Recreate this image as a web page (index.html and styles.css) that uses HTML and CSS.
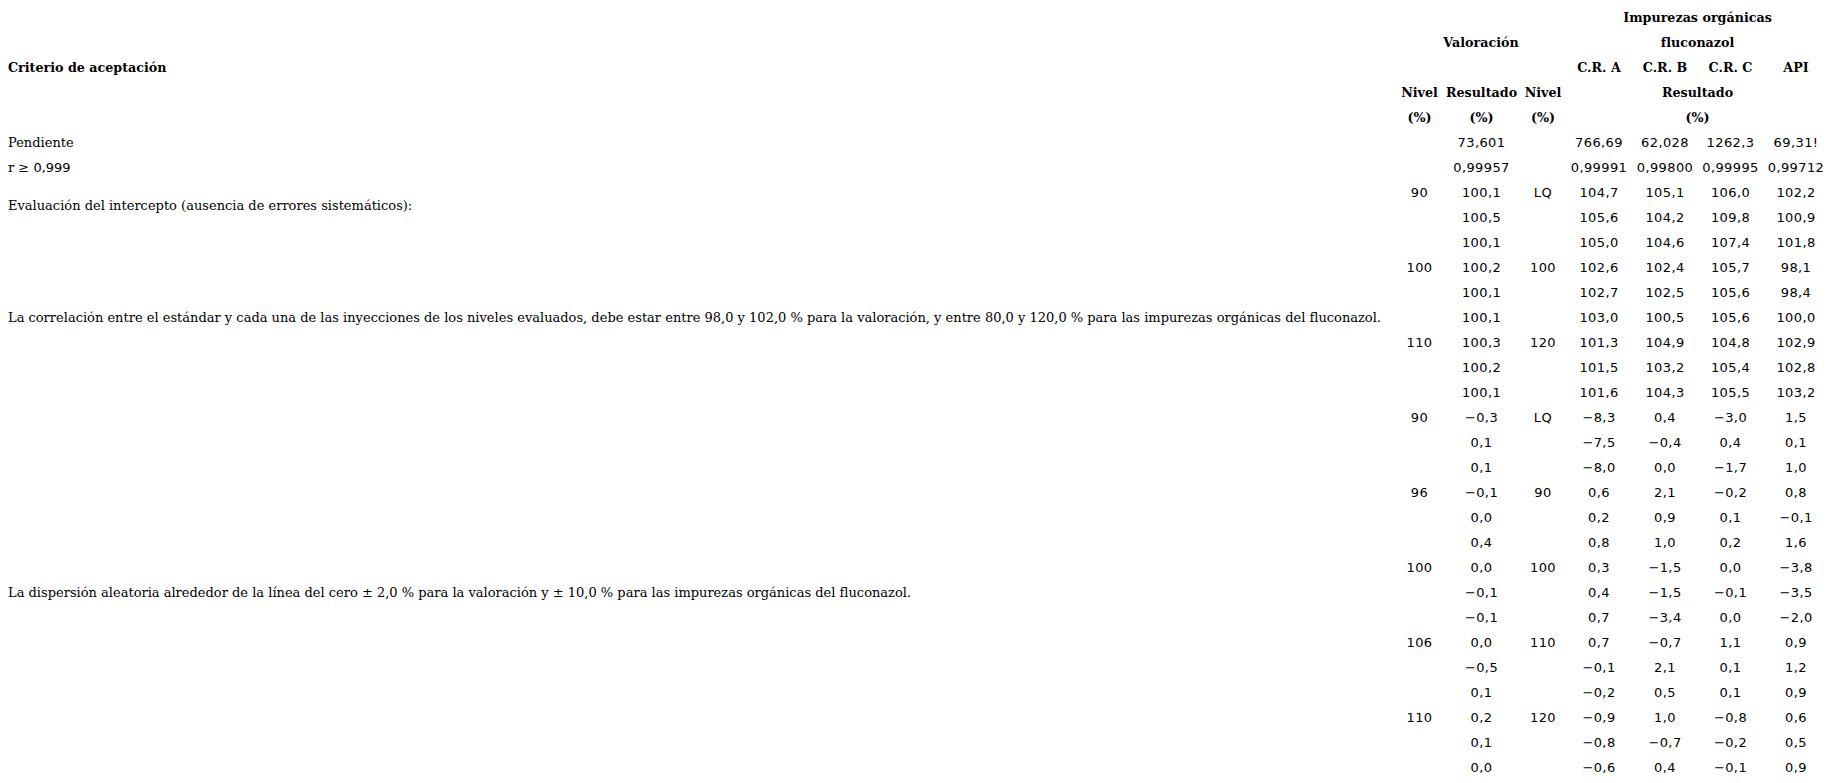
FILE: index.html
```html
<!DOCTYPE html>
<html lang="es">
<head>
<meta charset="utf-8">
<title>Criterio de aceptación</title>
<link rel="stylesheet" href="styles.css">
</head>
<body>
<table class="tbl">
<colgroup>
<col class="c-crit"><col class="c-n1"><col class="c-res"><col class="c-n2"><col class="c-a"><col class="c-b"><col class="c-c"><col class="c-api">
</colgroup>
<tbody>
<tr><th class="crit-h" rowspan="5">Criterio de aceptación</th><th colspan="3" rowspan="3">Valoración</th><th colspan="4">Impurezas orgánicas</th></tr>
<tr><th colspan="4">fluconazol</th></tr>
<tr><th>C.R. A</th><th>C.R. B</th><th>C.R. C</th><th>API</th></tr>
<tr><th>Nivel</th><th>Resultado</th><th>Nivel</th><th colspan="4">Resultado</th></tr>
<tr><th>(%)</th><th>(%)</th><th>(%)</th><th colspan="4">(%)</th></tr>

<tr><td class="crit">Pendiente</td><td></td><td>73,601</td><td></td><td>766,69</td><td>62,028</td><td>1262,3</td><td>69,31!</td></tr>
<tr><td class="crit">r ≥ <span class="num">0,999</span></td><td></td><td>0,99957</td><td></td><td>0,99991</td><td>0,99800</td><td>0,99995</td><td>0,99712</td></tr>

<tr><td class="crit" rowspan="2">Evaluación del intercepto (ausencia de errores sistemáticos):</td><td>90</td><td>100,1</td><td>LQ</td><td>104,7</td><td>105,1</td><td>106,0</td><td>102,2</td></tr>
<tr><td></td><td>100,5</td><td></td><td>105,6</td><td>104,2</td><td>109,8</td><td>100,9</td></tr>

<tr><td class="crit" rowspan="7">La correlación entre el estándar y cada una de las inyecciones de los niveles evaluados, debe estar entre 98,0 y 102,0 % para la valoración, y entre 80,0 y 120,0 % para las impurezas orgánicas del fluconazol.</td><td></td><td>100,1</td><td></td><td>105,0</td><td>104,6</td><td>107,4</td><td>101,8</td></tr>
<tr><td>100</td><td>100,2</td><td>100</td><td>102,6</td><td>102,4</td><td>105,7</td><td>98,1</td></tr>
<tr><td></td><td>100,1</td><td></td><td>102,7</td><td>102,5</td><td>105,6</td><td>98,4</td></tr>
<tr><td></td><td>100,1</td><td></td><td>103,0</td><td>100,5</td><td>105,6</td><td>100,0</td></tr>
<tr><td>110</td><td>100,3</td><td>120</td><td>101,3</td><td>104,9</td><td>104,8</td><td>102,9</td></tr>
<tr><td></td><td>100,2</td><td></td><td>101,5</td><td>103,2</td><td>105,4</td><td>102,8</td></tr>
<tr><td></td><td>100,1</td><td></td><td>101,6</td><td>104,3</td><td>105,5</td><td>103,2</td></tr>

<tr><td class="crit" rowspan="15">La dispersión aleatoria alrededor de la línea del cero ± 2,0 % para la valoración y ± 10,0 % para las impurezas orgánicas del fluconazol.</td><td>90</td><td>−0,3</td><td>LQ</td><td>−8,3</td><td>0,4</td><td>−3,0</td><td>1,5</td></tr>
<tr><td></td><td>0,1</td><td></td><td>−7,5</td><td>−0,4</td><td>0,4</td><td>0,1</td></tr>
<tr><td></td><td>0,1</td><td></td><td>−8,0</td><td>0,0</td><td>−1,7</td><td>1,0</td></tr>
<tr><td>96</td><td>−0,1</td><td>90</td><td>0,6</td><td>2,1</td><td>−0,2</td><td>0,8</td></tr>
<tr><td></td><td>0,0</td><td></td><td>0,2</td><td>0,9</td><td>0,1</td><td>−0,1</td></tr>
<tr><td></td><td>0,4</td><td></td><td>0,8</td><td>1,0</td><td>0,2</td><td>1,6</td></tr>
<tr><td>100</td><td>0,0</td><td>100</td><td>0,3</td><td>−1,5</td><td>0,0</td><td>−3,8</td></tr>
<tr><td></td><td>−0,1</td><td></td><td>0,4</td><td>−1,5</td><td>−0,1</td><td>−3,5</td></tr>
<tr><td></td><td>−0,1</td><td></td><td>0,7</td><td>−3,4</td><td>0,0</td><td>−2,0</td></tr>
<tr><td>106</td><td>0,0</td><td>110</td><td>0,7</td><td>−0,7</td><td>1,1</td><td>0,9</td></tr>
<tr><td></td><td>−0,5</td><td></td><td>−0,1</td><td>2,1</td><td>0,1</td><td>1,2</td></tr>
<tr><td></td><td>0,1</td><td></td><td>−0,2</td><td>0,5</td><td>0,1</td><td>0,9</td></tr>
<tr><td>110</td><td>0,2</td><td>120</td><td>−0,9</td><td>1,0</td><td>−0,8</td><td>0,6</td></tr>
<tr><td></td><td>0,1</td><td></td><td>−0,8</td><td>−0,7</td><td>−0,2</td><td>0,5</td></tr>
<tr><td></td><td>0,0</td><td></td><td>−0,6</td><td>0,4</td><td>−0,1</td><td>0,9</td></tr>
</tbody>
</table>
</body>
</html>
```

FILE: styles.css
```css
html, body {
  margin: 0;
  padding: 0;
  background: #ffffff;
}
body {
  font-family: "DejaVu Serif", "Liberation Serif", serif;
  font-size: 13px;
  color: #000000;
}
.tbl {
  border-collapse: collapse;
  table-layout: fixed;
  width: 1829px;
  margin-top: 5px;
}
.c-crit { width: 1396px; }
.c-n1 { width: 47px; }
.c-res { width: 77px; }
.c-n2 { width: 46px; }
.c-a { width: 66px; }
.c-b { width: 66px; }
.c-c { width: 65px; }
.c-api { width: 66px; }
.tbl tr {
  height: 25px;
}
.tbl th,
.tbl td {
  padding: 0;
  height: 25px;
  line-height: 25px;
  text-align: center;
  vertical-align: middle;
  white-space: nowrap;
}
.tbl td {
  font-family: "DejaVu Sans", "Liberation Sans", sans-serif;
  font-size: 13px;
  letter-spacing: 0.4px;
}
.tbl th {
  font-weight: bold;
  font-size: 12.7px;
}
.tbl .crit,
.tbl .crit-h {
  text-align: left;
  padding-left: 8px;
}
.tbl td.crit {
  font-family: "DejaVu Serif", "Liberation Serif", serif;
  letter-spacing: 0;
}
.num {
  font-family: "DejaVu Sans", "Liberation Sans", sans-serif;
}
```
